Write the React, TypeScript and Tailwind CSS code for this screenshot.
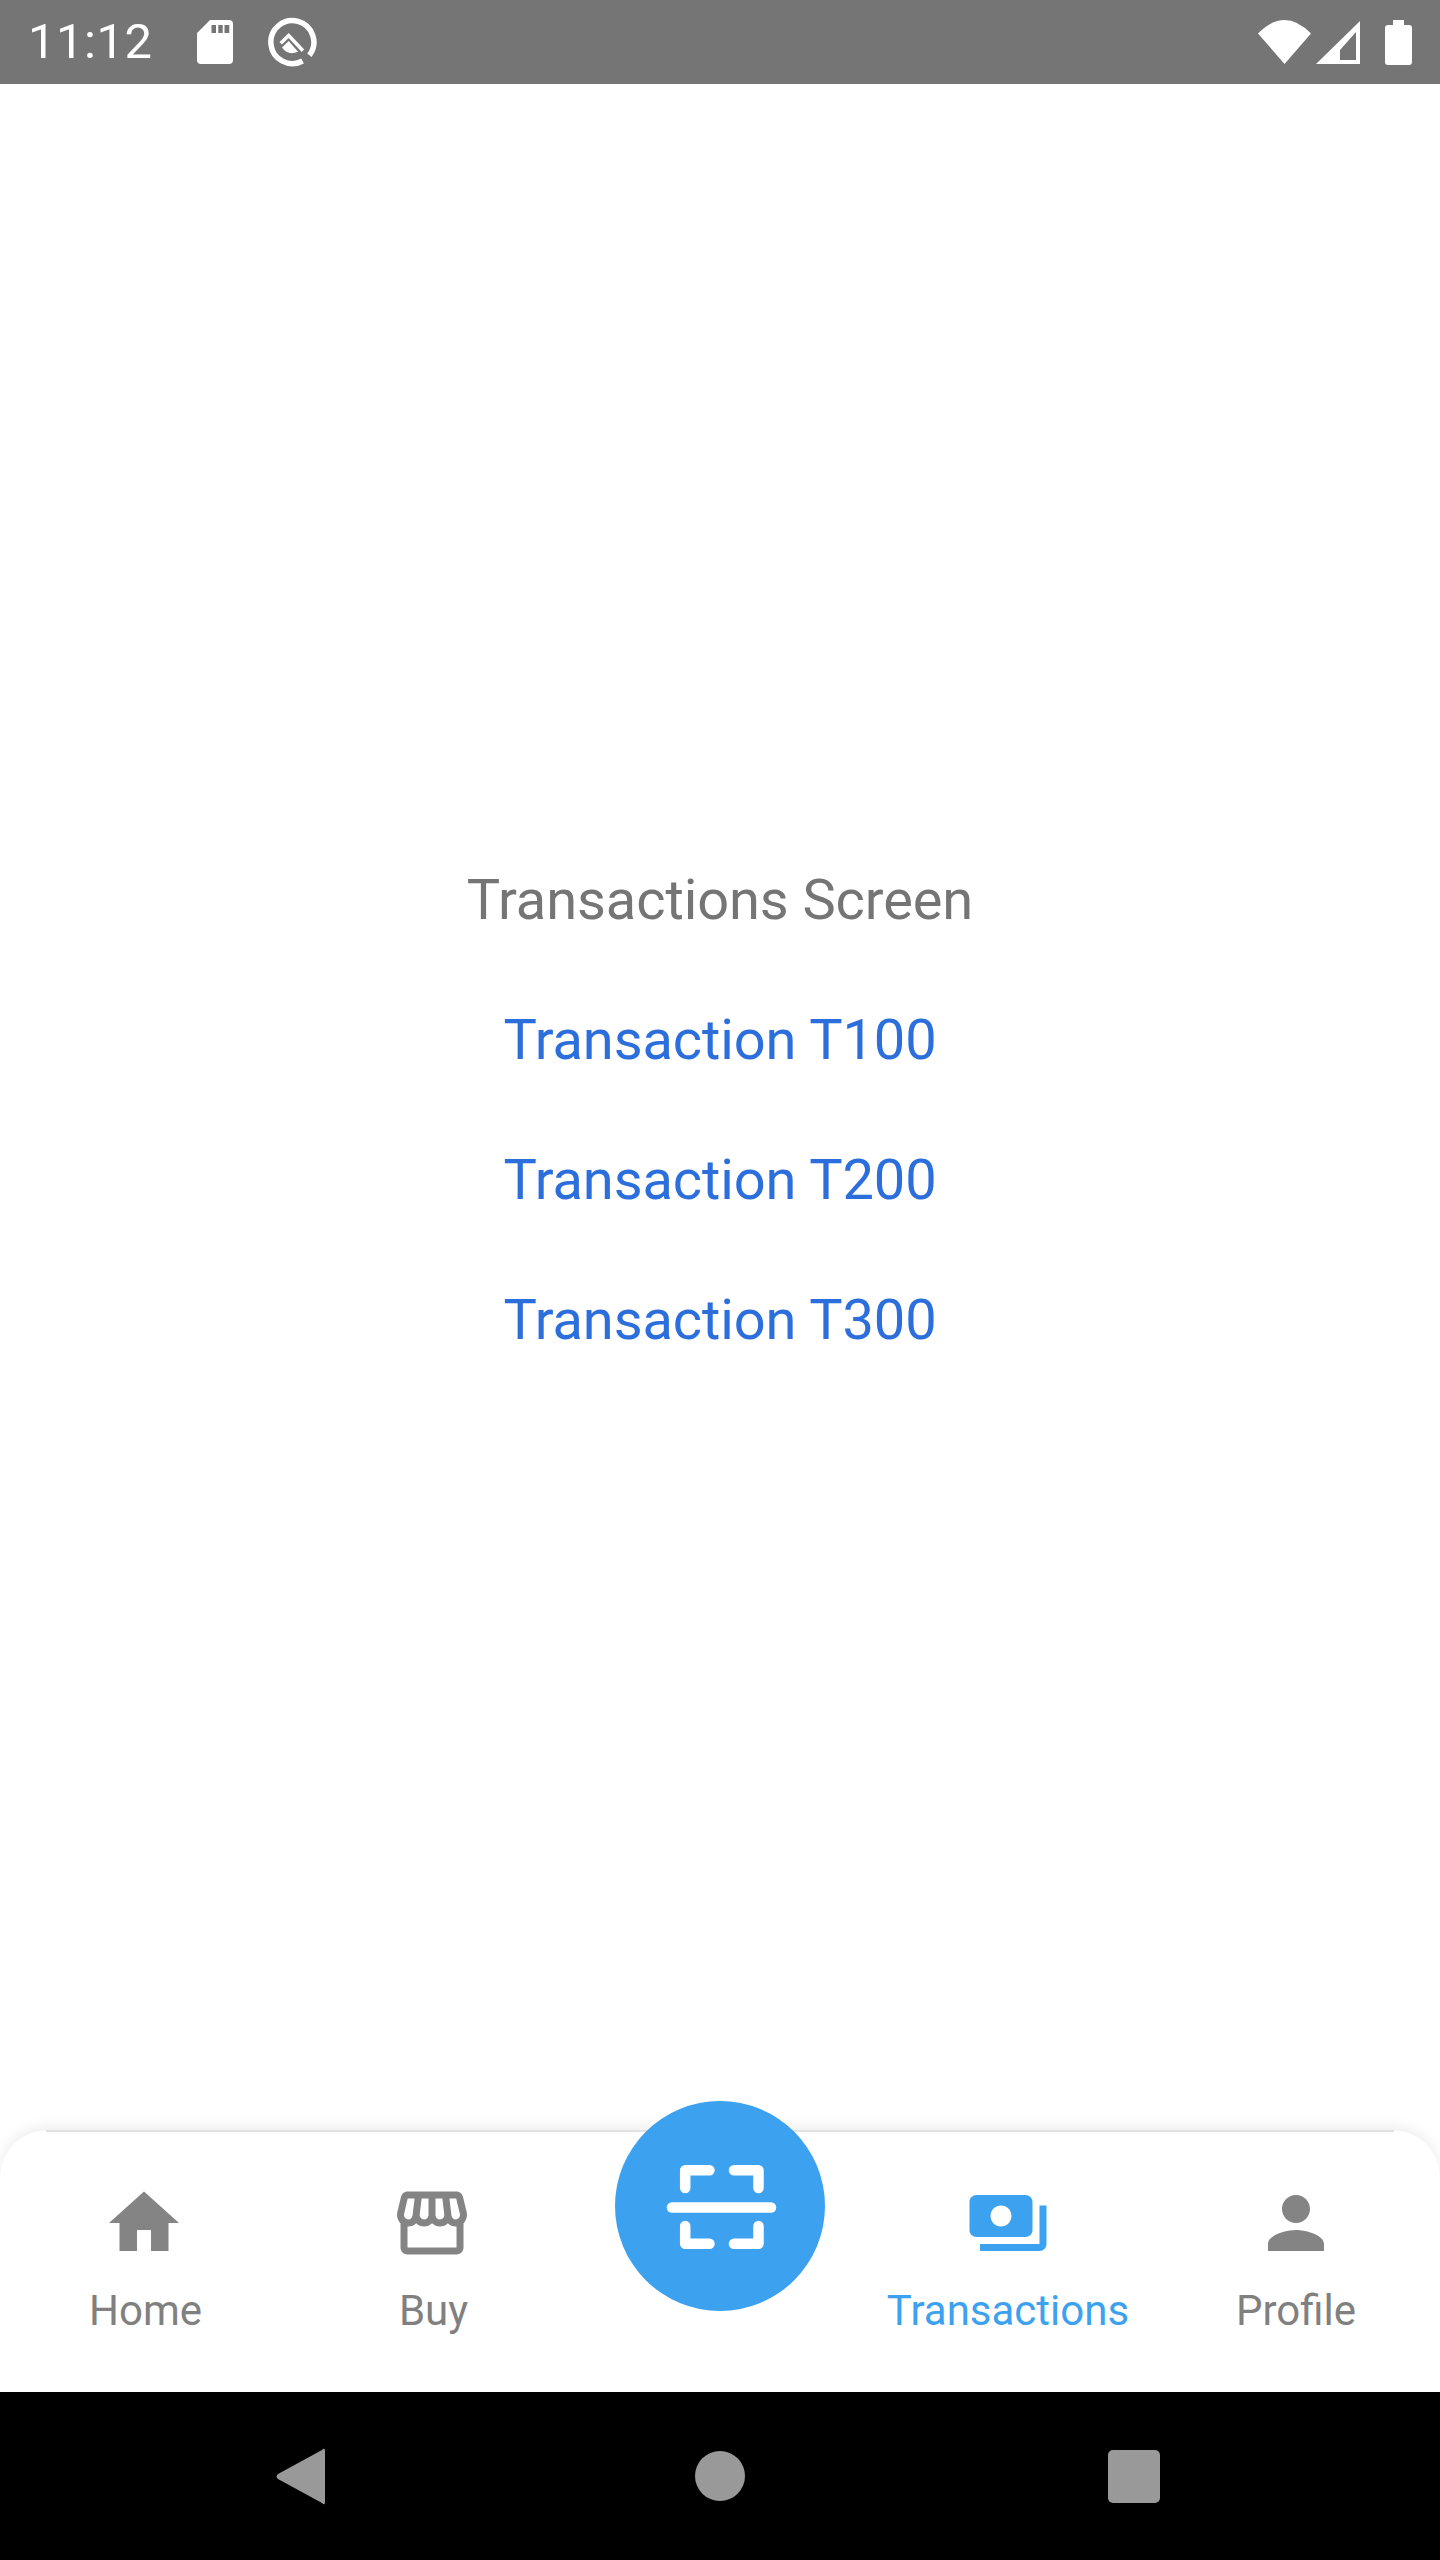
import { MdHome, MdOutlineStorefront, MdPayments, MdPerson } from "react-icons/md";

function StatusBar() {
  return (
    <div className="h-[84px] bg-[#757575] flex items-center justify-between pl-[28px] pr-[28px] text-white">
      <div className="flex items-center">
        <span className="text-[49px] leading-[84px] w-[169px] tracking-[0.5px]">11:12</span>
        <svg width="36" height="44" viewBox="0 0 36 44" className="fill-white">
          <path
            fillRule="evenodd"
            d="M13 0H32a4 4 0 0 1 4 4V40a4 4 0 0 1-4 4H4a4 4 0 0 1-4-4V13ZM14.5 5v8h4.5V5ZM21.3 5v8h4.4V5ZM27.5 5v8h4.8V5Z"
          />
        </svg>
        <svg width="50" height="50" viewBox="0 0 50 50" className="ml-[35px]">
          <path d="M41.4 38.2A21.5 21.5 0 1 0 34.6 44" fill="none" stroke="white" strokeWidth="5.5" />
          <path d="M12.7 26.3L20.7 18.6L35 33.7" fill="none" stroke="white" strokeWidth="3.5" />
          <path d="M14 30.5L20.7 24L30 34.7Q20 39 14 30.5Z" fill="white" />
        </svg>
      </div>
      <div className="flex items-center">
        <svg width="53" height="44" viewBox="0 0 53 44" className="fill-white">
          <path d="M0 13.5Q26.5-13.5 53 13.5L26.5 44Z" />
        </svg>
        <svg width="44" height="43" viewBox="0 0 44 43" className="ml-[5px] fill-white">
          <path fillRule="evenodd" d="M44 0V43H0ZM40 11L24 29V39H40Z" />
        </svg>
        <svg width="27" height="45" viewBox="0 0 27 45" className="ml-[25px] fill-white">
          <path d="M8 0H19V5H24a3 3 0 0 1 3 3V42a3 3 0 0 1-3 3H3a3 3 0 0 1-3-3V8a3 3 0 0 1 3-3H8Z" />
        </svg>
      </div>
    </div>
  );
}

function Tab({ label, icon, active, nudge }: { label: string; icon: React.ReactNode; active?: boolean; nudge?: boolean }) {
  return (
    <div className={`flex flex-col items-center ${active ? "text-[#3ca2ef]" : "text-[#848484]"}`}>
      {icon}
      <span className={`text-[42px] leading-[50px] mt-[21px] ${nudge ? "ml-[3px]" : ""} ${active ? "text-[#3ca2ef]" : "text-[#808080]"}`}>
        {label}
      </span>
    </div>
  );
}

function ScanButton() {
  return (
    <div className="absolute left-[615px] top-[-29px] w-[210px] h-[210px] rounded-full bg-[#3ca2ef] flex items-center justify-center">
      <svg width="122" height="94" viewBox="0 0 122 94" fill="none" stroke="white" strokeWidth="10.5" strokeLinecap="round" strokeLinejoin="round" className="translate-x-[1px] translate-y-[1px]">
        <path d="M25.2 28V10.2H49.5" />
        <path d="M74 10.2H98.5V28" />
        <path d="M12 47.5H111" />
        <path d="M25.2 66V83.8H49.5" />
        <path d="M74 83.8H98.5V66" />
      </svg>
    </div>
  );
}

export default function App() {
  return (
    <div className="w-[1440px] h-[2560px] flex flex-col bg-white font-['Roboto',sans-serif] overflow-hidden">
      <StatusBar />
      <main className="flex-1 flex flex-col items-center justify-center gap-[74px] pt-[6px] text-[56px] leading-[66px] tracking-[-0.1px]">
        <p className="text-[#757575]">Transactions Screen</p>
        <p className="text-[#2c6fdc]">Transaction T100</p>
        <p className="text-[#2c6fdc]">Transaction T200</p>
        <p className="text-[#2c6fdc]">Transaction T300</p>
      </main>
      <nav className="relative h-[262px] bg-white rounded-t-[48px] shadow-[0_-4px_14px_rgba(0,0,0,0.07)] grid grid-cols-5 pt-[51px]">
        <div className="absolute left-[46px] right-[46px] top-0 h-[2px] bg-[#e2e2e2]" />
        <Tab label="Home" nudge icon={<MdHome size={84} />} />
        <Tab label="Buy" nudge icon={<MdOutlineStorefront size={84} />} />
        <div />
        <Tab label="Transactions" active icon={<MdPayments size={84} />} />
        <Tab label="Profile" icon={<MdPerson size={84} />} />
        <ScanButton />
      </nav>
      <div className="h-[168px] bg-black flex items-center pl-[276px]">
        <svg width="49" height="57" viewBox="0 0 49 57" className="fill-[#999999]">
          <path d="M49 3V54Q49 58 46 55L2 31Q-1 28.5 2 26L46 2Q49-1 49 3Z" />
        </svg>
        <div className="w-[50px] h-[50px] rounded-full bg-[#999999] ml-[370px]" />
        <div className="w-[52px] h-[53px] rounded-[5px] bg-[#999999] ml-[363px]" />
      </div>
    </div>
  );
}
